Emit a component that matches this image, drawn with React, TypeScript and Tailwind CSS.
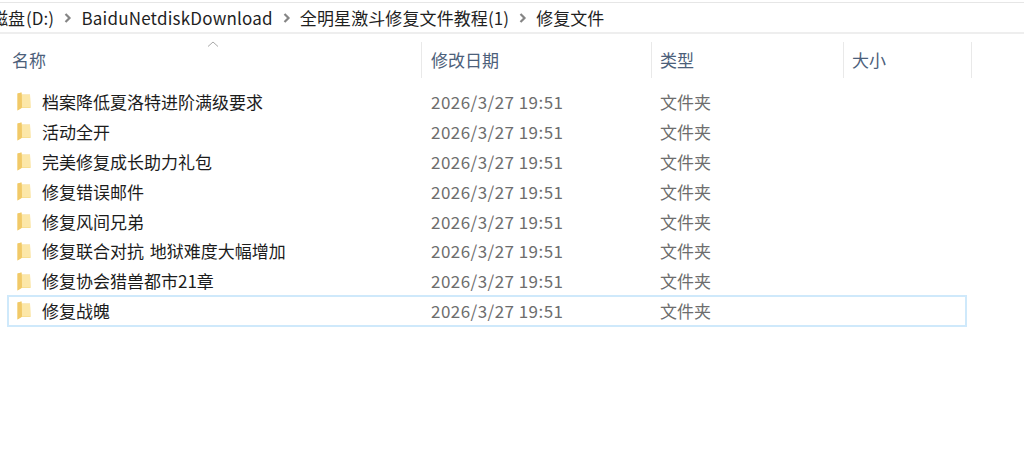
const font = { fontFamily: '"Noto Sans CJK SC", "Noto Sans", sans-serif' };

const rows = [
  "档案降低夏洛特进阶满级要求",
  "活动全开",
  "完美修复成长助力礼包",
  "修复错误邮件",
  "修复风间兄弟",
  "修复联合对抗 地狱难度大幅增加",
  "修复协会猎兽都市21章",
  "修复战魄",
];

function Folder() {
  return (
    <svg width="14" height="19" viewBox="0 0 14 19" className="shrink-0">
      <path d="M0.5 1.5 L4.5 0.5 L4.5 2.5 L13 2.5 L13.5 16 L4.5 16 L0.5 18.5 Z" fill="#f5d67e" />
      <path d="M0.5 1.5 L4.5 0.5 L5 15 L4.5 16 L0.5 18.5 Z" fill="#f1c968" />
      <path d="M5 3 L13 3 L13.5 15.5 L5 15.5 Z" fill="#fce7a8" />
    </svg>
  );
}

function Chevron() {
  return (
    <svg width="8" height="10" viewBox="0 0 8 10" className="shrink-0">
      <path d="M1.5 1 L5.5 5 L1.5 9" fill="none" stroke="#858585" strokeWidth="2.2" />
    </svg>
  );
}

function Head({ w, label, children }: { w: string; label: string; children?: React.ReactNode }) {
  return (
    <div className={`${w} relative h-full shrink-0 border-r border-[#e9e9e9] flex items-center text-[#4c607a] text-[17px]`}>
      {label}
      {children}
    </div>
  );
}

export default function App() {
  return (
    <div className="w-[1024px] h-[461px] bg-white overflow-hidden" style={font}>
      <div className="mt-[2px] h-[32px] border-t border-[#e6e6e6] border-b-2 border-b-[#eeeeee] flex items-center overflow-hidden text-[17px] text-[#1f1f1f] leading-none whitespace-nowrap">
        <span className="shrink-0 -ml-[9px]">磁盘</span>
        <span className="shrink-0 ml-[1px]">(D:)</span>
        <span className="ml-[10px] mr-[9.5px] flex"><Chevron /></span>
        <span className="tracking-[0.2px]">BaiduNetdiskDownload</span>
        <span className="ml-[10px] mr-[9px] flex"><Chevron /></span>
        <span className="tracking-[0.1px]">全明星激斗修复文件教程(1)</span>
        <span className="ml-[10px] mr-[9px] flex"><Chevron /></span>
        <span>修复文件</span>
      </div>
      <div className="mt-[8px] h-[36px] flex">
        <Head w="w-[422px] pl-[12px]" label="名称">
          <svg width="12" height="6" viewBox="0 0 12 6" className="absolute left-[207px] -top-[1px]">
            <path d="M1 5.5 L6 1 L11 5.5" fill="none" stroke="#a8a8a8" strokeWidth="1" />
          </svg>
        </Head>
        <Head w="w-[230px] pl-[9px]" label="修改日期" />
        <Head w="w-[192px] pl-[8px]" label="类型" />
        <Head w="w-[128px] pl-[8px]" label="大小" />
      </div>
      <div className="mt-[9px] ml-[8px] w-[958px]">
        {rows.map((name, i) => (
          <div
            key={name}
            className={`h-[29.86px] flex items-center text-[17px] whitespace-nowrap ${i === rows.length - 1 ? "outline-2 -outline-offset-1 outline-[#cfe9fb]" : ""}`}
          >
            <div className="w-[414px] flex items-center gap-[11px] pl-[9px] text-[#1c1c1c] [word-spacing:2px]">
              <Folder />
              <span>{name}</span>
            </div>
            <div className="w-[230px] pl-[9px] text-[#6d6d6d] tracking-[0.45px]">2026/3/27 19:51</div>
            <div className="pl-[8px] text-[#6d6d6d]">文件夹</div>
          </div>
        ))}
      </div>
    </div>
  );
}
